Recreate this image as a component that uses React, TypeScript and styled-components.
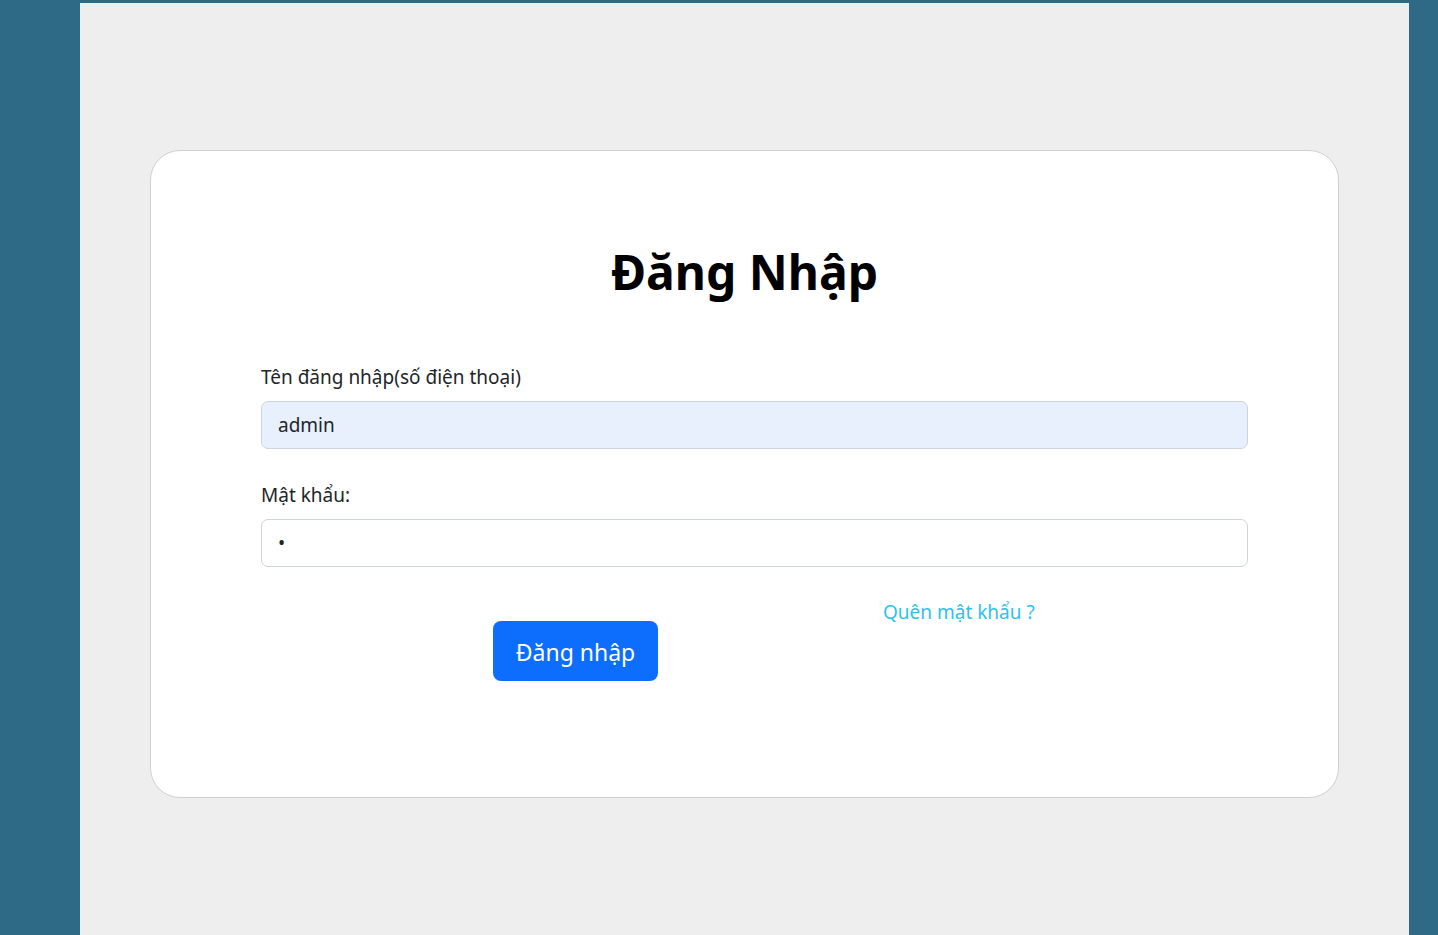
import React from "react";
import styled, { createGlobalStyle } from "styled-components";

const Global = createGlobalStyle`
  html, body { margin: 0; padding: 0; }
  body {
    background: #2e6a86;
    font-family: "Noto Sans", "Open Sans", sans-serif;
    color: #212529;
  }
  * { box-sizing: border-box; }
`;

const Page = styled.div`
  padding-top: 3px;
  padding-left: 80px;
  min-height: 935px;
`;

const Panel = styled.main`
  width: 1329px;
  min-height: 932px;
  background: #eeeeee;
  padding: 147px 0 0 70px;
`;

const Card = styled.section`
  width: 1189px;
  height: 648px;
  background: #ffffff;
  border: 1px solid #d0d0d0;
  border-radius: 30px;
  padding: 92px 90px 0 110px;
`;

const Title = styled.h1`
  margin: 0 0 61px -20px;
  text-align: center;
  font-size: 48px;
  line-height: 58px;
  font-weight: 700;
  color: #000;
`;

const Field = styled.div<{ $gap?: number }>`
  display: flex;
  flex-direction: column;
  margin-bottom: ${(p) => p.$gap ?? 0}px;
`;

const Label = styled.label`
  font-size: 19px;
  line-height: 30px;
  color: #212529;
  margin-bottom: 9px;
`;

const Input = styled.input<{ $filled?: boolean }>`
  width: 987px;
  height: 48px;
  padding: 0 16px;
  font-family: inherit;
  font-size: 19px;
  color: #212529;
  background: ${(p) => (p.$filled ? "#e8f0fe" : "#ffffff")};
  border: 1px solid #ced4da;
  border-radius: 7px;
  outline: none;
`;

const Actions = styled.div`
  display: flex;
  align-items: flex-start;
  padding-left: 232px;
`;

const Button = styled.button`
  margin-top: 24px;
  height: 60px;
  width: 165px;
  padding: 2px 0 0;
  border: none;
  border-radius: 8px;
  background: #0d6efd;
  color: #ffffff;
  font-family: inherit;
  font-size: 23px;
  cursor: pointer;
`;

const Link = styled.a`
  margin-left: 225px;
  font-size: 19px;
  line-height: 30px;
  color: #2cc2ec;
  text-decoration: none;
`;

export default function App() {
  return (
    <>
      <Global />
      <Page>
        <Panel>
          <Card>
            <Title>Đăng Nhập</Title>
            <Field $gap={31}>
              <Label>Tên đăng nhập(số điện thoại)</Label>
              <Input $filled defaultValue="admin" />
            </Field>
            <Field $gap={30}>
              <Label>Mật khẩu:</Label>
              <Input type="password" defaultValue="1" />
            </Field>
            <Actions>
              <Button>Đăng nhập</Button>
              <Link href="#">Quên mật khẩu ?</Link>
            </Actions>
          </Card>
        </Panel>
      </Page>
    </>
  );
}
